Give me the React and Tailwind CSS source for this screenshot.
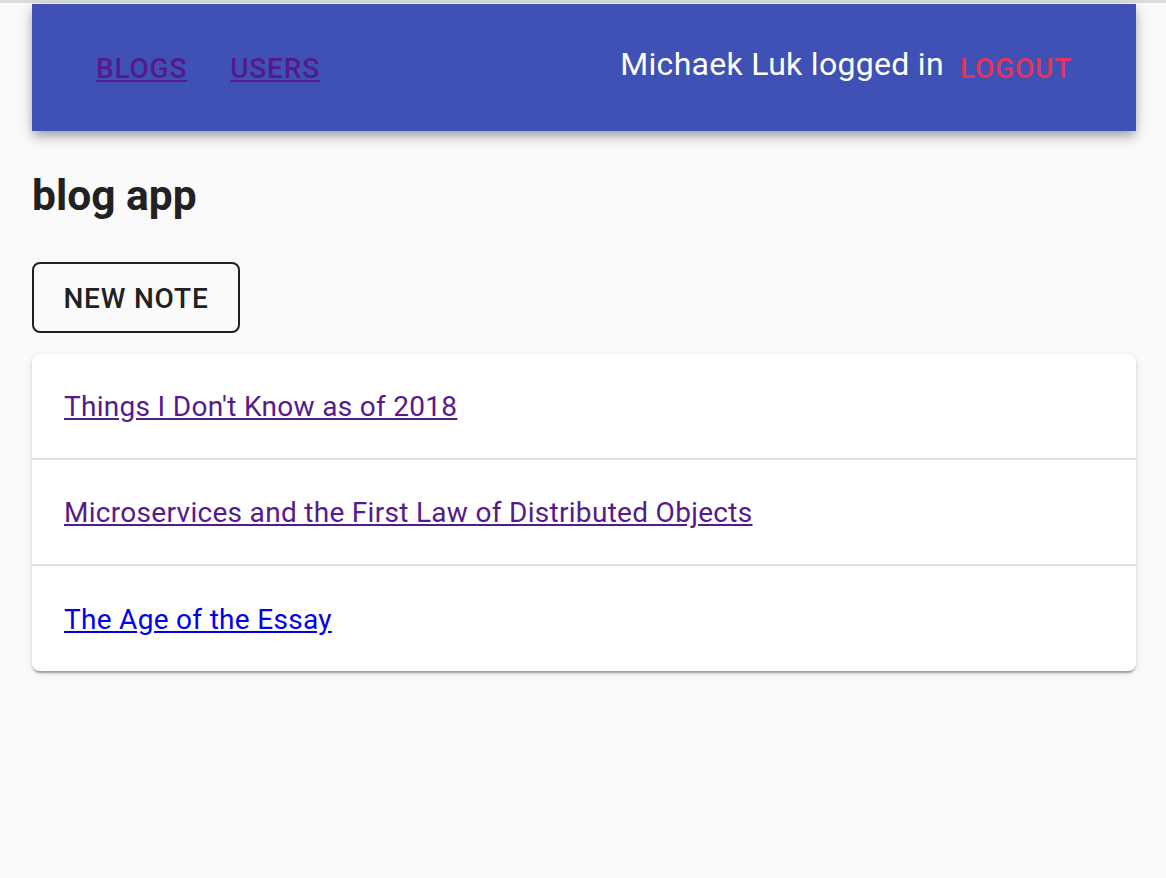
import React from "react";

export default function App() {
  const rows = [
    { title: "Things I Don't Know as of 2018", visited: true },
    { title: "Microservices and the First Law of Distributed Objects", visited: true },
    { title: "The Age of the Essay", visited: false },
  ];
  return (
    <div className="min-h-screen bg-[#fafafa] font-['Roboto',sans-serif] text-[#212121]">
      <div className="h-[3px] bg-[#dcdce3]" />
      <div className="pl-8 pr-[30px] pt-px">
        <header className="flex h-[127px] items-center bg-[#3f51b5] pl-16 pr-[64px] pt-[2px] shadow-[0_4px_8px_-2px_rgba(0,0,0,0.2),0_8px_10px_0_rgba(0,0,0,0.14),0_2px_20px_0_rgba(0,0,0,0.12)]">
          <a href="#" className="text-[28px] font-medium uppercase leading-[40px] tracking-[0.8px] text-[#551a8b] underline">
            Blogs
          </a>
          <a href="#" className="ml-[43px] text-[28px] font-medium uppercase leading-[40px] tracking-[0.8px] text-[#551a8b] underline">
            Users
          </a>
          <span className="mb-[9px] ml-auto text-[32px] leading-[40px] tracking-[0.3px] text-white">
            Michaek Luk logged in
          </span>
          <span className="ml-[16px] text-[28px] font-medium uppercase leading-[40px] tracking-[0.8px] text-[#e3345f]">
            Logout
          </span>
        </header>

        <h2 className="mt-[41px] text-[42.5px] font-bold leading-[48px] text-[#212121]">blog app</h2>

        <button className="mt-[42px] flex h-[71px] w-[208px] items-center justify-center rounded-lg border-2 border-[#212121] pt-[2px] text-[28px] font-medium uppercase leading-[40px] tracking-[0.8px] text-[#212121]">
          New note
        </button>

        <div className="mt-[21px] overflow-hidden rounded-lg bg-white shadow-[0_4px_2px_-2px_rgba(0,0,0,0.2),0_2px_2px_0_rgba(0,0,0,0.14),0_2px_6px_0_rgba(0,0,0,0.12)]">
          {rows.map((r, i) => (
            <div
              key={i}
              className={
                i < rows.length - 1
                  ? "flex h-[106px] items-center border-b-2 border-[#e0e0e0] px-8 pt-[2px]"
                  : "flex h-[105px] items-center px-8 pt-[2px]"
              }
            >
              <a
                href="#"
                className={
                  r.visited
                    ? "text-[28px] leading-[40px] tracking-[0.3px] text-[#551a8b] underline"
                    : "text-[28px] leading-[40px] tracking-[0.3px] text-[#0000ee] underline"
                }
              >
                {r.title}
              </a>
            </div>
          ))}
        </div>
      </div>
    </div>
  );
}
